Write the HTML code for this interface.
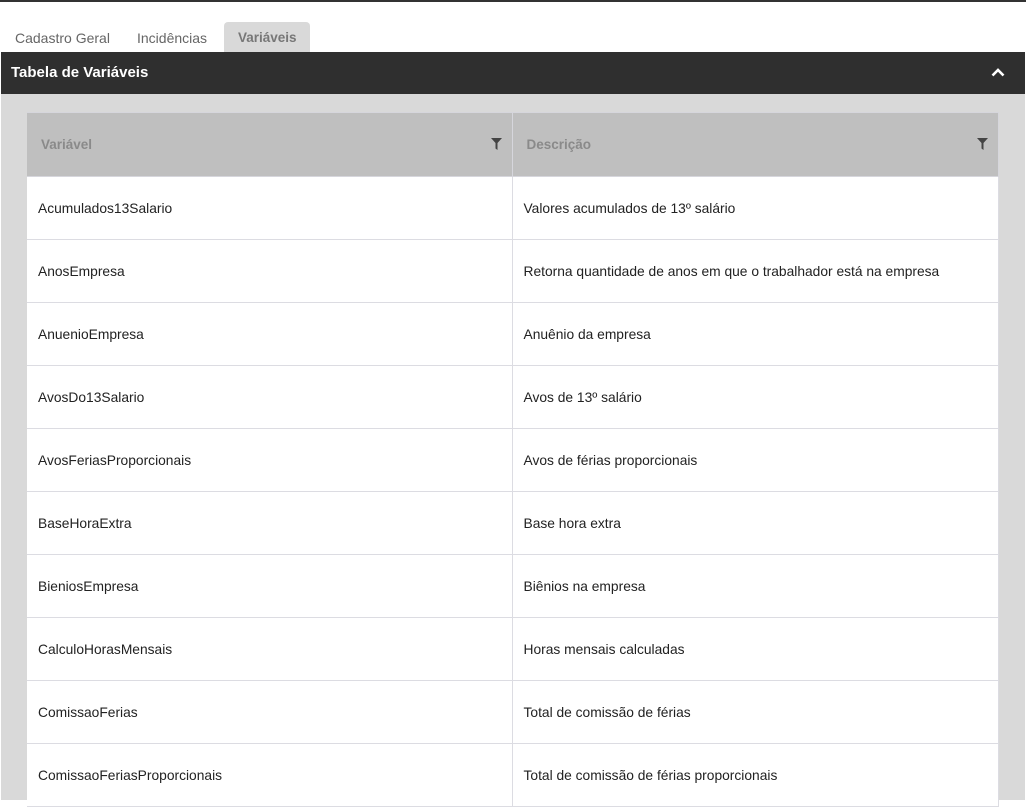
<!DOCTYPE html>
<html><head><meta charset="utf-8"><style>
*{box-sizing:border-box;margin:0;padding:0}
body{width:1026px;height:800px;overflow:hidden;background:#fff;font-family:"Liberation Sans",sans-serif;position:relative}
.topline{position:absolute;left:0;top:0;width:1026px;height:2px;background:#333}
.tabs{position:absolute;top:22px;left:0;height:30px}
.tab{position:absolute;top:0;height:30px;line-height:32px;font-size:14px;color:#666;white-space:nowrap}
.tab.active{background:#d9d9d9;border-radius:4px 4px 0 0;color:#777;font-weight:bold;padding:0 13px 0 14px;font-size:13.5px}
.bar{position:absolute;left:1px;top:52px;width:1024px;height:42px;background:#2f2f2f;color:#fff;font-weight:bold;font-size:15px;line-height:42px;padding-left:10px}
.panel{position:absolute;left:1px;top:94px;width:1024px;height:706px;background:#d9d9d9}
table{position:absolute;left:27px;top:112px;width:972px;border-collapse:collapse;background:#fff}
th{height:64px;background:#bfbfbf;color:#8a8a8a;font-size:13.5px;text-align:left;padding-left:14px;position:relative;border:1px solid #d6d6dc;border-top:1px solid #d6d6dc}
td{height:63px;font-size:13.8px;color:#222;padding-left:11px;border:1px solid #dcdce2}
th svg{position:absolute;right:10px;top:25px}
tr td:first-child,tr th:first-child{border-left:none}
</style></head><body>
<div class="topline"></div>
<div class="tabs">
<div class="tab" style="left:15px">Cadastro Geral</div>
<div class="tab" style="left:137px">Incidências</div>
<div class="tab active" style="left:224px">Variáveis</div>
</div>
<div class="bar">Tabela de Variáveis
<svg style="position:absolute;right:20px;top:15px" width="14" height="10" viewBox="0 0 14 10"><path d="M1.5 8.5 L7 3 L12.5 8.5" fill="none" stroke="#fff" stroke-width="2.6"/></svg></div>
<div class="panel"></div>
<table>
<tr><th style="width:485px">Variável<svg width="11" height="12" viewBox="0 0 11 12"><path d="M0 0H11L6.5 5V12L4.5 10.5V5Z" fill="#444"/></svg></th><th>Descrição<svg width="11" height="12" viewBox="0 0 11 12"><path d="M0 0H11L6.5 5V12L4.5 10.5V5Z" fill="#444"/></svg></th></tr>
<tr><td>Acumulados13Salario</td><td>Valores acumulados de 13º salário</td></tr>
<tr><td>AnosEmpresa</td><td>Retorna quantidade de anos em que o trabalhador está na empresa</td></tr>
<tr><td>AnuenioEmpresa</td><td>Anuênio da empresa</td></tr>
<tr><td>AvosDo13Salario</td><td>Avos de 13º salário</td></tr>
<tr><td>AvosFeriasProporcionais</td><td>Avos de férias proporcionais</td></tr>
<tr><td>BaseHoraExtra</td><td>Base hora extra</td></tr>
<tr><td>BieniosEmpresa</td><td>Biênios na empresa</td></tr>
<tr><td>CalculoHorasMensais</td><td>Horas mensais calculadas</td></tr>
<tr><td>ComissaoFerias</td><td>Total de comissão de férias</td></tr>
<tr><td>ComissaoFeriasProporcionais</td><td>Total de comissão de férias proporcionais</td></tr>
</table>
</body></html>
